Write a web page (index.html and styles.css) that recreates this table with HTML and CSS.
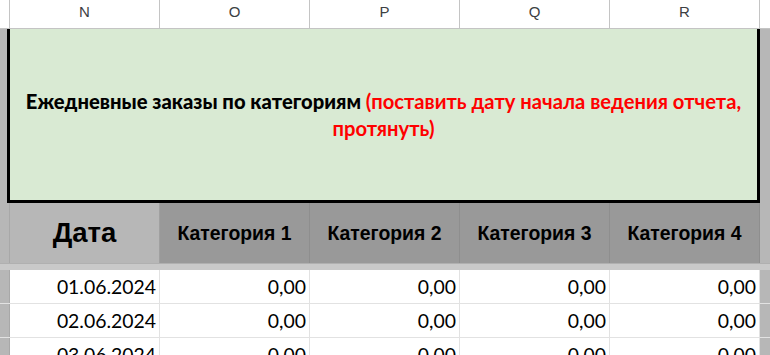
FILE: index.html
```html
<!DOCTYPE html>
<html lang="ru">
<head>
<meta charset="utf-8">
<link rel="stylesheet" href="styles.css">
</head>
<body>
<div class="sheet">
  <div class="colheads">
    <div class="corner"></div>
    <div class="ch">N</div>
    <div class="ch">O</div>
    <div class="ch">P</div>
    <div class="ch">Q</div>
    <div class="ch">R</div>
    <div class="ch-end"></div>
  </div>
  <div class="banner-row">
    <div class="side-l"></div>
    <div class="banner">
      <p class="title"><b>Ежедневные заказы по категориям </b><span class="red">(поставить дату начала ведения отчета, протянуть)</span></p>
    </div>
    <div class="side-r"></div>
  </div>
  <div class="thead">
    <div class="rn"></div>
    <div class="th th-date">Дата</div>
    <div class="th th-cat">Категория 1</div>
    <div class="th th-cat">Категория 2</div>
    <div class="th th-cat">Категория 3</div>
    <div class="th th-cat">Категория 4</div>
    <div class="th-end"></div>
  </div>
  <div class="freeze"></div>
  <div class="row">
    <div class="rn"></div>
    <div class="td">01.06.2024</div>
    <div class="td">0,00</div>
    <div class="td">0,00</div>
    <div class="td">0,00</div>
    <div class="td">0,00</div>
    <div class="td-end"></div>
  </div>
  <div class="row">
    <div class="rn"></div>
    <div class="td">02.06.2024</div>
    <div class="td">0,00</div>
    <div class="td">0,00</div>
    <div class="td">0,00</div>
    <div class="td">0,00</div>
    <div class="td-end"></div>
  </div>
  <div class="row">
    <div class="rn"></div>
    <div class="td">03.06.2024</div>
    <div class="td">0,00</div>
    <div class="td">0,00</div>
    <div class="td">0,00</div>
    <div class="td">0,00</div>
    <div class="td-end"></div>
  </div>
</div>
</body>
</html>
```

FILE: styles.css
```css
* { box-sizing: border-box; }
html, body { margin: 0; padding: 0; background: #fff; overflow: hidden; }
.sheet { width: 770px; height: 355px; overflow: hidden; }

.colheads, .thead, .row {
  display: grid;
  grid-template-columns: 10px repeat(5, 150px) 10px;
}
.colheads { height: 29px; border-bottom: 1px solid #c4c4c4; background: #fff; }
.corner, .ch { border-right: 1px solid #c4c4c4; }
.ch {
  display: flex; align-items: center; justify-content: center;
  font-family: "Liberation Sans", Arial, sans-serif;
  font-size: 15px; color: #3c4043;
  padding-bottom: 6px;
}

.banner-row { display: flex; height: 174px; }
.side-l { width: 7px; background: #b7b7b7; }
.side-r { width: 10px; background: #b7b7b7; }
.banner {
  width: 753px;
  background: #d9ead3;
  border: 3px solid #000;
  border-top: none;
  display: flex; align-items: center; justify-content: center;
  padding: 0 6px 0;
}
.title {
  margin: 0;
  text-align: center;
  font-family: Lato, "Open Sans", sans-serif;
  font-weight: bold;
  font-size: 20.2px;
  line-height: 27px;
  color: #000;
}
.red { color: #ff0000; }

.thead { height: 60px; background: #b7b7b7; }
.thead .rn { border-right: 1px solid #a8a8a8; }
.th {
  display: flex; align-items: center; justify-content: center;
  font-family: "Liberation Sans", Arial, sans-serif;
  font-weight: bold; color: #000;
  border-right: 1px solid #8e8e8e;
}
.th-date { font-size: 27.5px; background: #b7b7b7; border-right-color: #a0a0a0; }
.th-cat { font-size: 19.4px; background: #999999; padding-top: 1px; }
.th-end { background: #b7b7b7; }

.freeze { height: 7px; background: #c9c9c9; border-top: 1px solid #b0b0b0; }

.row { height: 34px; border-bottom: 1px solid #e2e2e2; }
.row .rn { background: #b7b7b7; border-right: 1px solid #a8a8a8; }
.td {
  display: flex; align-items: center; justify-content: flex-end;
  padding: 0 3px 0 0;
  border-right: 1px solid #e2e2e2;
  font-family: Lato, "Open Sans", sans-serif;
  font-size: 19.4px; color: #000;
}
.td-end { background: #b7b7b7; }
```
